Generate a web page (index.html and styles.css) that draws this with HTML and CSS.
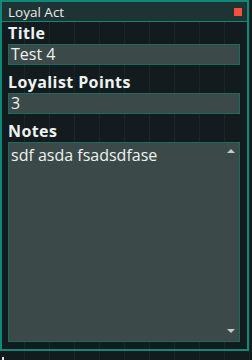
FILE: index.html
```html
<!DOCTYPE html>
<html>
<head>
<meta charset="utf-8">
<link rel="stylesheet" href="styles.css">
</head>
<body>
<div class="window">
  <div class="titlebar">
    <span class="title">Loyal Act</span>
    <span class="close"></span>
  </div>
  <div class="content">
    <div class="label first">Title</div>
    <div class="input">Test 4</div>
    <div class="label">Loyalist Points</div>
    <div class="input">3</div>
    <div class="label">Notes</div>
    <div class="textarea">
      <div class="text">sdf asda fsadsdfase</div>
      <div class="scroll">
        <span class="arrow up"></span>
        <span class="arrow down"></span>
      </div>
    </div>
  </div>
</div>
<span class="mark"></span>
</body>
</html>
```

FILE: styles.css
```css
html, body {
  margin: 0;
  padding: 0;
}
body {
  width: 252px;
  height: 360px;
  overflow: hidden;
  background-color: #121b1d;
  background-image:
    linear-gradient(to right, transparent 24px, #1a2728 24px, #1a2728 26px, transparent 26px);
  background-size: 25px 25px;
  font-family: "Open Sans", "DejaVu Sans", sans-serif;
  color: #eef2f1;
  position: relative;
}
.window {
  width: 245px;
  height: 347px;
  border: 2px solid #0f8a79;
  display: flex;
  flex-direction: column;
}
.titlebar {
  height: 19px;
  background: #1e3333;
  border-bottom: 1px solid #0f8a79;
  display: flex;
  align-items: center;
  justify-content: space-between;
  padding: 0 5px 0 6px;
}
.title {
  font-size: 13.5px;
  color: #e6eceb;
}
.close {
  width: 8px;
  height: 8px;
  background: #f5503f;
}
.content {
  flex: 1;
  display: flex;
  flex-direction: column;
  padding: 0 7px 7px 6px;
}
.label {
  font-weight: bold;
  font-size: 16px;
  letter-spacing: 0.4px;
  line-height: 20px;
  padding-top: 7px;
  padding-bottom: 1px;
}
.label.first {
  padding-top: 1px;
}
.input {
  height: 19px;
  background: #3b4a48;
  border: 1px solid #1c6a5e;
  font-size: 16px;
  line-height: 19px;
  padding-left: 2px;
}
.textarea {
  flex: 1;
  background: #3b4a48;
  border: 1px solid #1c6a5e;
  display: flex;
}
.text {
  flex: 1;
  font-size: 16px;
  line-height: 18px;
  padding: 3px 2px;
}
.scroll {
  width: 16px;
  display: flex;
  flex-direction: column;
  justify-content: space-between;
  align-items: center;
  padding: 6px 0 8px 0;
}
.arrow {
  width: 0;
  height: 0;
  border-left: 4px solid transparent;
  border-right: 4px solid transparent;
}
.up {
  border-bottom: 4px solid #c5cbca;
}
.down {
  border-top: 4px solid #c5cbca;
}
.mark {
  position: absolute;
  left: 2px;
  top: 357px;
  width: 2px;
  height: 3px;
  background: #e6e6e6;
}
```
